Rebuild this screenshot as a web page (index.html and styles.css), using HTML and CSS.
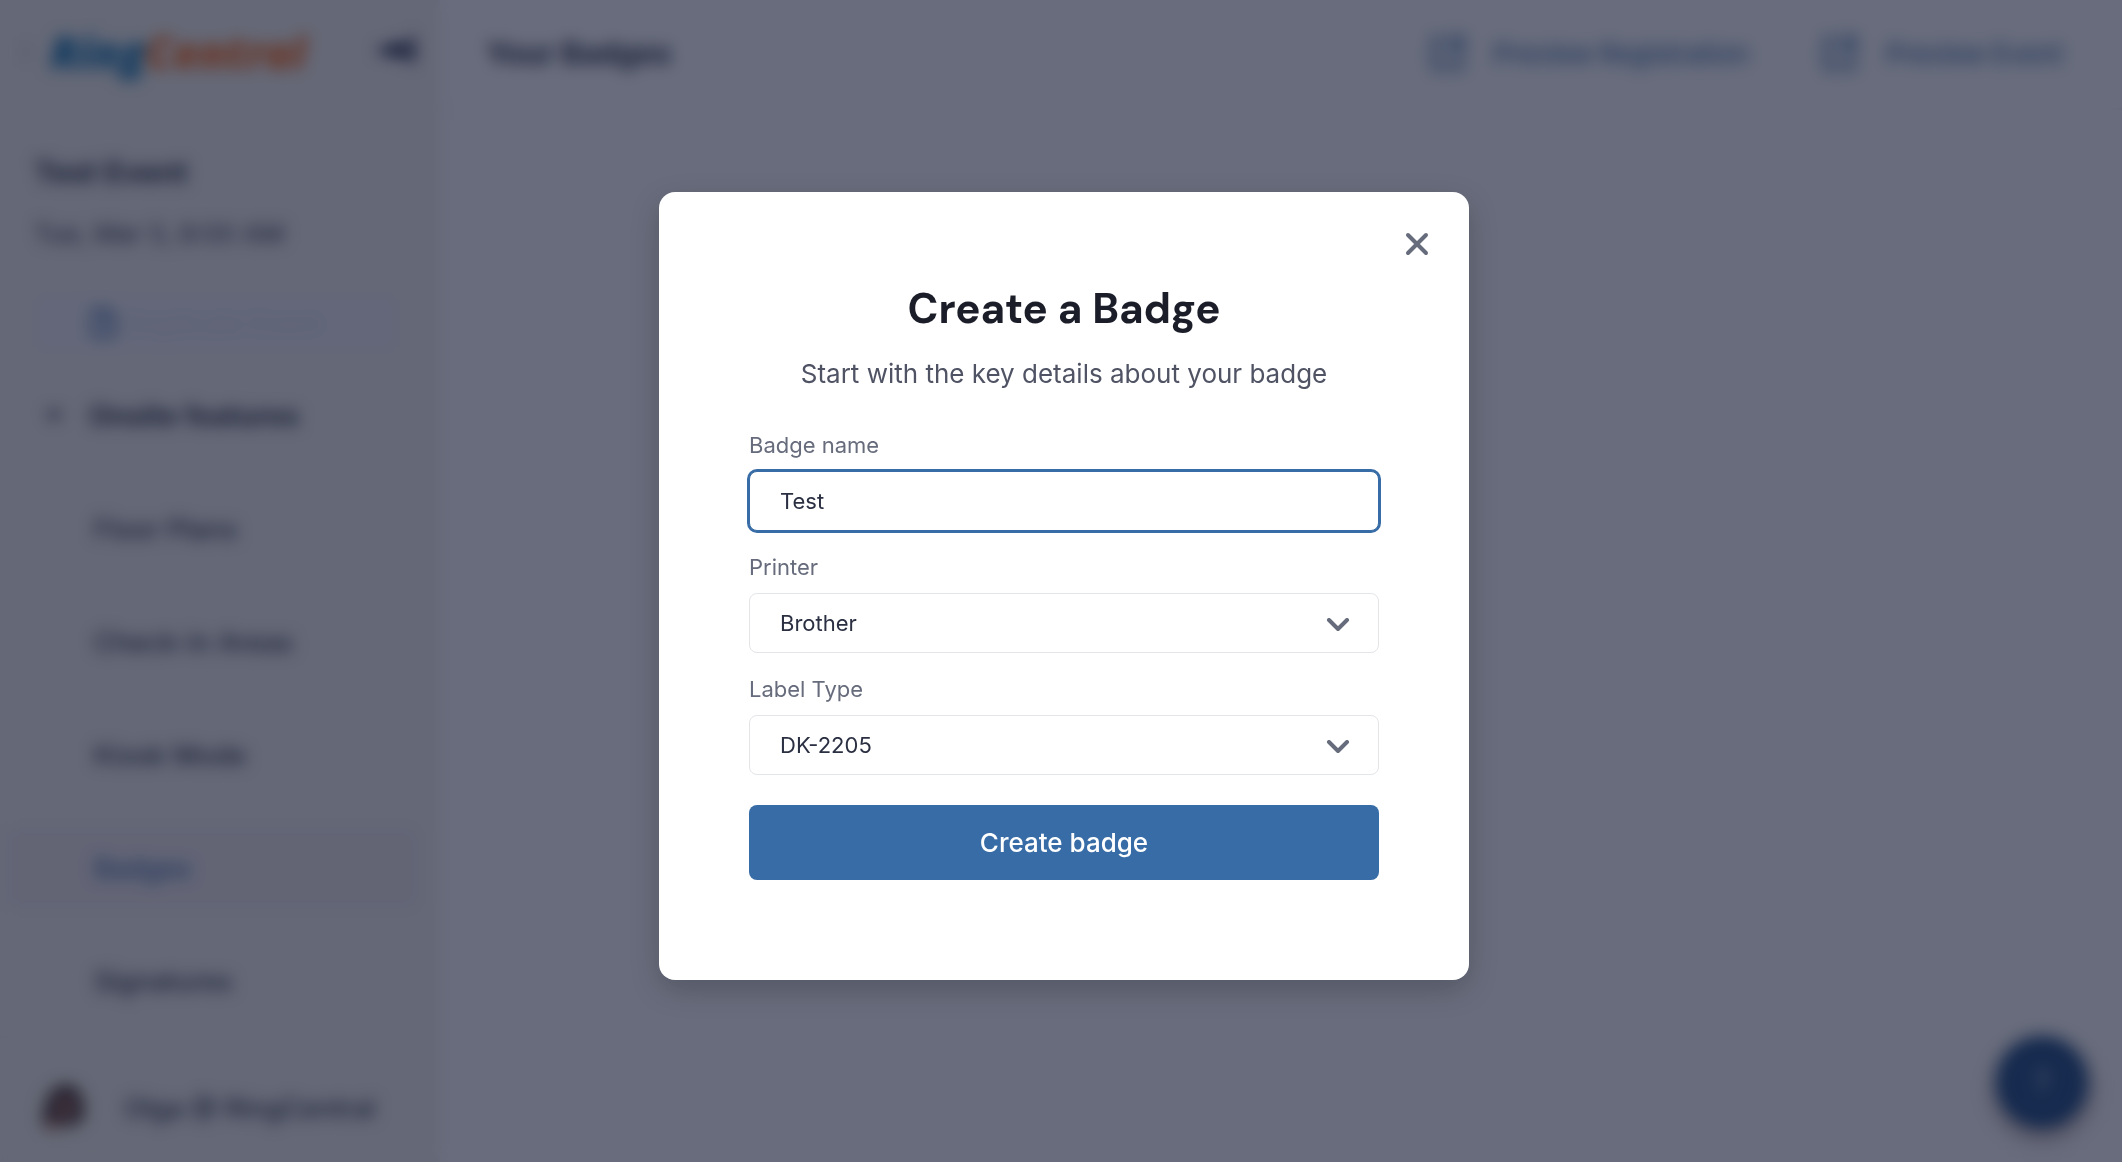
FILE: index.html
```html
<!DOCTYPE html>
<html lang="en">
  <head>
    <meta charset="UTF-8" />
    <meta name="viewport" content="width=device-width, initial-scale=1.0" />
    <title>Your Badges</title>
    <link rel="stylesheet" href="styles.css">
  </head>
  <body>
    <div class="app">
      <aside class="sidebar">
        <div class="brand">
          <svg class="backIcon" width="12" height="18" viewBox="0 0 12 18"><path d="M9 2L3 9l6 7" /></svg>
          <a href="#" class="logo"><span class="logoRing">Ring</span><span class="logoCentral">Central</span></a>
          <button class="collapseBtn" aria-label="Collapse menu">
            <svg width="42" height="32" viewBox="0 0 42 32">
              <path d="M2 12h12v7H2z" />
              <path d="M10 15L22 5v20zM22 9h8v13h-8zM33 2h6v26h-6z" />
            </svg>
          </button>
        </div>
        <div class="eventInfo">
          <h2>Test Event</h2>
          <p>Tue, Mar 5, 8:00 AM</p>
          <button class="eventBtn">
            <svg width="26" height="30" viewBox="0 0 26 30"><path d="M3 3h12l7 7v17H3zM15 3v7h7" /></svg>
            <span>Duplicate Event</span>
          </button>
        </div>
        <nav class="menu">
          <a href="#" class="menuTitle">
            <svg width="18" height="14" viewBox="0 0 18 14"><path d="M1 2h16L9 13z" /></svg>
            Onsite features
          </a>
          <a href="#">Floor Plans</a>
          <a href="#">Check-in Areas</a>
          <a href="#">Kiosk Mode</a>
          <a href="#" class="active">Badges</a>
          <a href="#">Signatures</a>
        </nav>
        <div class="user">
          <svg width="54" height="54" viewBox="0 0 54 54">
            <circle cx="27" cy="27" r="27" fill="#e9e4d6" />
            <path d="M6 44C10 30 10 6 29 4c17 0 19 18 18 34l-12 6z" fill="#3a2320" />
            <path d="M22 18c4-5 16-4 16 6 0 9-4 14-9 14s-9-8-7-20z" fill="#a3705c" />
            <path d="M7 45l9-9 8 4-8 12z" fill="#c08a70" />
          </svg>
          <span>Olga @ RingCentral</span>
        </div>
      </aside>
      <main class="content">
        <header class="header">
          <h1>Your Badges</h1>
          <div class="headerLinks">
            <a href="#">
              <svg width="36" height="36" viewBox="0 0 36 36"><path d="M16 5H4v27h27V20M20 4h12v12M32 4L16 20" /></svg>
              Preview Registration
            </a>
            <a href="#">
              <svg width="36" height="36" viewBox="0 0 36 36"><path d="M16 5H4v27h27V20M20 4h12v12M32 4L16 20" /></svg>
              Preview Event
            </a>
          </div>
        </header>
      </main>
      <button class="helpBtn" aria-label="Help">?</button>
    </div>

    <div class="overlay">
      <form class="modal" role="dialog" aria-labelledby="modalTitle">
        <button type="button" class="closeBtn" aria-label="Close">
          <svg width="24" height="24" viewBox="0 0 24 24"><path d="M3 3l18 18M21 3L3 21" /></svg>
        </button>
        <h2 id="modalTitle" class="modalTitle">Create a Badge</h2>
        <p class="modalText">Start with the key details about your badge</p>
        <div class="field">
          <label for="badgeName">Badge name</label>
          <input type="text" id="badgeName" class="focused" value="Test" />
        </div>
        <div class="field">
          <label for="printer">Printer</label>
          <div class="selectBox">
            <select id="printer">
              <option>Brother</option>
            </select>
            <svg width="24" height="14" viewBox="0 0 24 14"><path d="M3 2l9 9 9-9" /></svg>
          </div>
        </div>
        <div class="field">
          <label for="labelType">Label Type</label>
          <div class="selectBox">
            <select id="labelType">
              <option>DK-2205</option>
            </select>
            <svg width="24" height="14" viewBox="0 0 24 14"><path d="M3 2l9 9 9-9" /></svg>
          </div>
        </div>
        <button type="submit" class="createBtn">Create badge</button>
      </form>
    </div>
  </body>
</html>
```
FILE: styles.css
```css
* {
  box-sizing: border-box;
}

body {
  margin: 0;
  font-family: Inter, sans-serif;
  color: #2a2f42;
  background-color: #fff;
}

h1,
h2,
p {
  margin: 0;
}

button,
input,
select {
  font-family: inherit;
}

svg {
  fill: none;
  flex-shrink: 0;
}

.app {
  display: flex;
  height: 100vh;
  overflow: hidden;
}

/* Sidebar */
.sidebar {
  width: 440px;
  display: flex;
  flex-direction: column;
  background-color: #f5f4ef;
  border-right: 2px solid #f9f3f6;
}

.brand {
  display: flex;
  align-items: center;
  height: 106px;
  padding: 0 20px 2px;
}

.backIcon {
  stroke: #9a9aa5;
  stroke-width: 2;
}

.logo {
  flex: 1;
  padding-left: 18px;
  font-size: 44px;
  font-weight: 800;
  font-style: italic;
  font-family: "Open Sans", sans-serif;
  text-decoration: none;
}

.logoRing {
  color: #066fac;
}

.logoCentral {
  color: #ff6a13;
}

.collapseBtn {
  padding: 0;
  border: none;
  background: none;
}

.collapseBtn path {
  fill: #15163f;
}

.eventInfo {
  padding: 48px 40px 0 34px;
}

.eventInfo h2 {
  font-size: 30px;
  line-height: 36px;
}

.eventInfo p {
  padding-top: 26px;
  font-size: 26px;
  line-height: 36px;
}

.eventBtn {
  display: flex;
  align-items: center;
  justify-content: center;
  gap: 10px;
  width: 100%;
  height: 58px;
  margin-top: 42px;
  padding: 0 20px 0 0;
  border: 2px solid #f3edf0;
  border-radius: 8px;
  background-color: #f1f1f7;
  color: #dcdce8;
  font-size: 26px;
  font-weight: 500;
}

.eventBtn path {
  stroke: #386ca6;
  stroke-width: 4;
}

.menu {
  flex: 1;
  display: flex;
  flex-direction: column;
  gap: 33px;
  padding: 24px 20px 0 6px;
}

.menu a {
  display: flex;
  align-items: center;
  height: 80px;
  padding-left: 88px;
  border-radius: 8px;
  color: #2a2f42;
  font-size: 27px;
  font-weight: 500;
  text-decoration: none;
}

.menu .menuTitle {
  gap: 26px;
  padding-left: 39px;
  font-size: 28px;
  font-weight: 700;
}

.menuTitle path {
  fill: #2a2f42;
}

.menu .active {
  background-color: #f0eaec;
  color: #386ca6;
}

.user {
  display: flex;
  align-items: center;
  gap: 34px;
  height: 126px;
  padding: 16px 36px 0;
  border-top: 2px solid #f5eeee;
  font-size: 27px;
  font-weight: 500;
}

/* Page header */
.content {
  flex: 1;
}

.header {
  display: flex;
  justify-content: space-between;
  align-items: center;
  height: 110px;
  padding: 0 34px 2px 46px;
  border-bottom: 2px solid #f0f0f4;
}

.header h1 {
  font-size: 30px;
}

.headerLinks {
  display: flex;
  gap: 22px;
}

.headerLinks a {
  display: flex;
  align-items: center;
  gap: 28px;
  height: 60px;
  padding: 0 25px;
  border: 1px solid #f3f3f7;
  border-radius: 8px;
  color: #386ca6;
  font-size: 26px;
  font-weight: 500;
  text-decoration: none;
}

.headerLinks path {
  stroke: #386ca6;
  stroke-width: 4;
}

.helpBtn {
  position: absolute;
  right: 34px;
  bottom: 34px;
  width: 92px;
  height: 92px;
  border: none;
  border-radius: 50%;
  background-color: #1c4a82;
  box-shadow: 0 8px 20px rgba(60, 20, 20, 0.5);
  color: #c8d3e3;
  font-size: 32px;
}

/* Create badge modal */
.overlay {
  position: fixed;
  inset: 0;
  display: flex;
  justify-content: center;
  align-items: center;
  padding: 10px 0 0 6px;
  background-color: rgba(18, 25, 50, 0.64);
  backdrop-filter: blur(8px);
}

.modal {
  position: relative;
  width: 810px;
  padding: 90px 90px 100px;
  border-radius: 16px;
  background-color: #fff;
  box-shadow: 0 10px 30px rgba(0, 0, 0, 0.2);
}

.closeBtn {
  position: absolute;
  top: 40px;
  right: 40px;
  display: flex;
  padding: 0;
  border: none;
  background: none;
  cursor: pointer;
}

.closeBtn path,
.selectBox path {
  stroke: #676c7c;
  stroke-width: 4;
  stroke-linecap: round;
  stroke-linejoin: round;
}

.modalTitle {
  font-family: "DM Sans", Lato, sans-serif;
  font-size: 42px;
  font-weight: 700;
  line-height: 54px;
  text-align: center;
  color: #1b1d29;
}

.modalText {
  padding: 20px 0 39px;
  font-size: 26px;
  line-height: 36px;
  text-align: center;
  color: #4f5364;
}

.field {
  padding-bottom: 22px;
}

.field label {
  display: block;
  padding-bottom: 11px;
  font-size: 22px;
  line-height: 29px;
  color: #676c7c;
}

.field input,
.field select {
  display: block;
  width: 100%;
  height: 60px;
  padding: 0 30px;
  border: 1px solid #e4e5e9;
  border-radius: 8px;
  background-color: #fff;
  color: #2a2f42;
  font-size: 22px;
}

.field select {
  appearance: none;
}

.field .focused {
  outline: none;
  border-color: #386ca6;
  box-shadow: 0 0 0 2px #386ca6;
}

.selectBox {
  position: relative;
}

.selectBox svg {
  position: absolute;
  top: 25px;
  right: 29px;
  pointer-events: none;
}

.createBtn {
  width: 100%;
  height: 75px;
  margin-top: 8px;
  border: none;
  border-radius: 8px;
  background-color: #386ca6;
  color: #fff;
  font-size: 26px;
  font-weight: 500;
  cursor: pointer;
}
```
